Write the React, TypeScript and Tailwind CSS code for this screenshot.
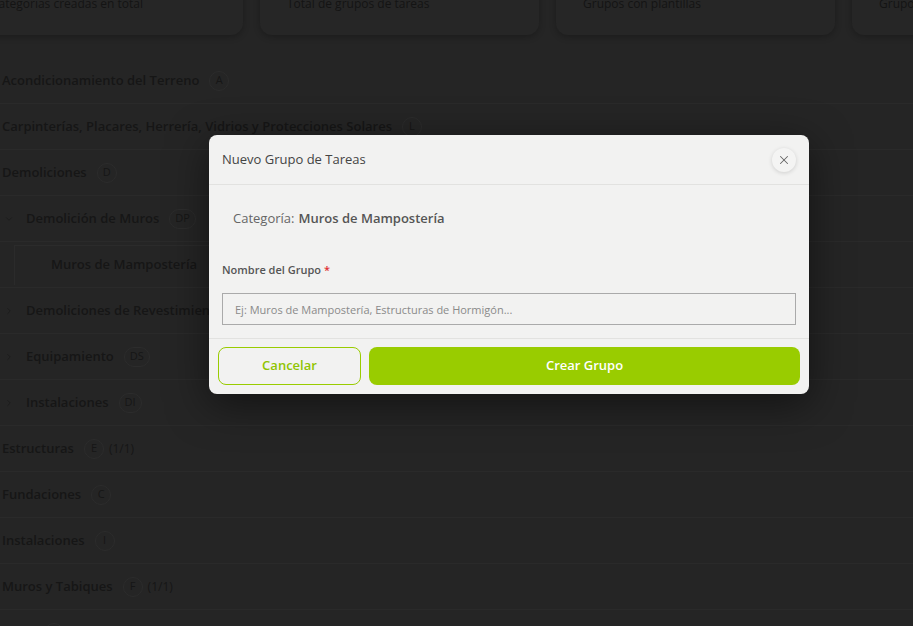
import React from "react";
import { X, ChevronDown, ChevronRight } from "lucide-react";

type Row = {
  label: string;
  code: string;
  count?: string;
  level: 0 | 1 | 2;
  chevron?: "down" | "right";
};

const rows: Row[] = [
  { label: "Acondicionamiento del Terreno", code: "A", level: 0 },
  { label: "Carpinterías, Placares, Herrería, Vidrios y Protecciones Solares", code: "L", level: 0 },
  { label: "Demoliciones", code: "D", level: 0 },
  { label: "Demolición de Muros", code: "DP", level: 1, chevron: "down" },
  { label: "Muros de Mampostería", code: "", level: 2 },
  { label: "Demoliciones de Revestimientos", code: "DR", level: 1, chevron: "right" },
  { label: "Equipamiento", code: "DS", level: 1, chevron: "right" },
  { label: "Instalaciones", code: "DI", level: 1, chevron: "right" },
  { label: "Estructuras", code: "E", count: "(1/1)", level: 0 },
  { label: "Fundaciones", code: "C", level: 0 },
  { label: "Instalaciones", code: "I", level: 0 },
  { label: "Muros y Tabiques", code: "F", count: "(1/1)", level: 0 },
  { label: "Pisos", code: "P", level: 0 },
];

function Badge({ code }: { code: string }) {
  return (
    <span className="ml-[10px] inline-flex h-[20px] min-w-[20px] items-center justify-center rounded-full border border-[#2c2c2c] bg-[#252525] px-[5px] text-[11px] font-normal text-[#161616]">
      {code}
    </span>
  );
}

export default function App() {
  return (
    <div
      className="relative h-[626px] w-[913px] overflow-hidden bg-[#252525]"
      style={{ fontFamily: '"Open Sans", "Noto Sans", sans-serif' }}
    >
      {/* background page */}
      <div className="flex flex-col">
        <div className="ml-[-36px] mt-[-19px] flex gap-[17px]">
          {["Categorías creadas en total", "Total de grupos de tareas", "Grupos con plantillas", "Grupos sin plantillas"].map((t) => (
            <div
              key={t}
              className="h-[54px] w-[279px] shrink-0 rounded-[12px] bg-[#262626] px-[27px] pt-[15px] text-[12px] leading-[16px] text-[#141414] shadow-[0_2px_6px_rgba(0,0,0,0.25)]"
            >
              {t}
            </div>
          ))}
        </div>
        <div className="mt-[23px] flex flex-col">
          {rows.map((r, i) => (
            <div key={i} className="flex h-[46px] items-center border-b border-[#2a2a2a] text-[13px] font-semibold text-[#161616]">
              {r.level === 0 && (
                <div className="flex items-center pl-[2px]">
                  <span>{r.label}</span>
                  <Badge code={r.code} />
                  {r.count && <span className="ml-[5px] text-[12px] font-normal">{r.count}</span>}
                </div>
              )}
              {r.level === 1 && (
                <div className="flex items-center pl-[4px]">
                  {r.chevron === "down" ? (
                    <ChevronDown size={10} strokeWidth={2} className="text-[#1a1a1a]" />
                  ) : (
                    <ChevronRight size={10} strokeWidth={2} className="text-[#1a1a1a]" />
                  )}
                  <span className="ml-[12px]">{r.label}</span>
                  <Badge code={r.code} />
                </div>
              )}
              {r.level === 2 && (
                <div className="ml-[14px] flex h-[40px] w-[300px] items-center border-l border-t border-[#2b2b2b] pl-[36px]">
                  <span>{r.label}</span>
                </div>
              )}
            </div>
          ))}
        </div>
      </div>

      {/* modal layer */}
      <div className="absolute inset-0 flex items-start justify-start pl-[209px] pt-[135px]">
        <div className="flex w-[600px] flex-col rounded-[8px] bg-[#f2f2f1] shadow-[0_10px_40px_rgba(0,0,0,0.5)]">
          <div className="flex h-[50px] items-center justify-between border-b border-[#e2e2e0] pl-[13px] pr-[13px]">
            <span className="text-[13px] font-medium text-[#444444]">Nuevo Grupo de Tareas</span>
            <button className="flex h-[24px] w-[24px] items-center justify-center rounded-full bg-[#f4f4f3] shadow-[0_1px_4px_rgba(0,0,0,0.15)]">
              <X size={14} strokeWidth={1.75} className="text-[#666666]" />
            </button>
          </div>
          <div className="flex flex-col px-[13px] pb-[13px] pt-[13px]">
            <div className="flex h-[42px] items-center px-[11px] text-[13px]">
              <span className="text-[#666666]">Categoría:</span>
              <span className="ml-[4px] font-semibold text-[#555555]">Muros de Mampostería</span>
            </div>
            <label className="mt-[22px] text-[11px] font-semibold leading-[16px] text-[#555555]">
              Nombre del Grupo <span className="text-[#e03131]">*</span>
            </label>
            <input
              className="mt-[15px] h-[32px] w-full border border-[#aaaaaa] bg-[#f2f2f1] px-[12px] text-[11px] text-[#555] outline-none placeholder:text-[#8a8a8a]"
              placeholder="Ej: Muros de Mampostería, Estructuras de Hormigón..."
            />
          </div>
          <div className="flex gap-[8px] border-t border-[#e2e2e0] px-[9px] pb-[9px] pt-[8px]">
            <button className="h-[38px] w-[143px] rounded-[8px] border border-[#99cc00] text-[13px] font-semibold text-[#8fc400]">
              Cancelar
            </button>
            <button className="h-[38px] flex-1 rounded-[8px] bg-[#99cc00] text-[13px] font-semibold text-white">
              Crear Grupo
            </button>
          </div>
        </div>
      </div>
    </div>
  );
}
